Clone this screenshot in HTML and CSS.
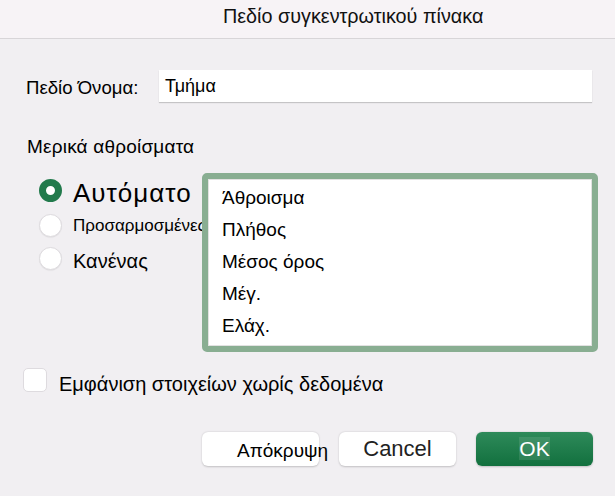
FILE: index.html
```html
<!DOCTYPE html>
<html lang="el">
<head>
<meta charset="utf-8">
<title>Πεδίο συγκεντρωτικού πίνακα</title>
<link rel="stylesheet" href="styles.css">
</head>
<body>
<div class="dialog">
  <header class="titlebar">Πεδίο συγκεντρωτικού πίνακα</header>

  <div class="name-row">
    <label class="name-label" for="field-name">Πεδίο Όνομα:</label>
    <div class="name-input" id="field-name">Τμήμα</div>
  </div>

  <div class="section-label">Μερικά αθροίσματα</div>

  <div class="subtotals">
    <div class="radios">
      <div class="radio-row row-auto">
        <span class="radio checked"></span>
        <span class="radio-label label-auto">Αυτόματο</span>
      </div>
      <div class="radio-row row-custom">
        <span class="radio"></span>
        <span class="radio-label label-custom">Προσαρμοσμένες</span>
      </div>
      <div class="radio-row row-none">
        <span class="radio"></span>
        <span class="radio-label label-none">Κανένας</span>
      </div>
    </div>

    <ul class="listbox">
      <li>Άθροισμα</li>
      <li>Πλήθος</li>
      <li>Μέσος όρος</li>
      <li>Μέγ.</li>
      <li>Ελάχ.</li>
    </ul>
  </div>

  <div class="check-row">
    <span class="checkbox"></span>
    <span class="check-label">Εμφάνιση στοιχείων χωρίς δεδομένα</span>
  </div>

  <div class="buttons">
    <button class="btn btn-hide">Απόκρυψη</button>
    <button class="btn btn-cancel">Cancel</button>
    <button class="btn btn-ok"><span class="ok-text">OK</span></button>
  </div>
</div>
</body>
</html>
```

FILE: styles.css
```css
* {
  box-sizing: border-box;
}

html, body {
  margin: 0;
  padding: 0;
}

body {
  width: 615px;
  height: 496px;
  overflow: hidden;
  background: #f1eff2;
  font-family: "Liberation Sans", Arial, sans-serif;
  color: #000;
}

.dialog {
  width: 615px;
  height: 496px;
}

/* window title */
.titlebar {
  height: 39px;
  background: #f7f3f6;
  border-bottom: 1px solid #d8d5d8;
  padding-left: 223px;
  font-size: 19.8px;
  line-height: 32px;
  color: #111;
}

/* field name */
.name-row {
  display: flex;
  align-items: center;
  margin-top: 31px;
  height: 32px;
}

.name-label {
  width: 159px;
  padding-left: 26px;
  padding-top: 3px;
  font-size: 18.6px;
}

.name-input {
  width: 433px;
  height: 32px;
  background: #fff;
  box-shadow: 0 1px 1px rgba(0, 0, 0, 0.18);
  padding-left: 6px;
  padding-top: 6px;
  font-size: 18px;
  line-height: 20px;
}

.section-label {
  margin-top: 35px;
  padding-left: 27px;
  font-size: 19px;
  letter-spacing: 0.2px;
  line-height: 20px;
}

/* subtotal options and function list */
.subtotals {
  display: flex;
  margin-top: 16px;
  height: 179px;
}

.radios {
  width: 202px;
  padding-left: 39px;
}

.radio-row {
  display: flex;
  align-items: flex-start;
  white-space: nowrap;
}

.row-auto { height: 34px; }
.row-custom { height: 35px; }
.row-none { height: 33px; }

.radio {
  flex: none;
  width: 23px;
  height: 23px;
  border-radius: 50%;
  background: #fff;
  border: 1px solid #dedbdf;
  box-shadow: 0 0.5px 1px rgba(0, 0, 0, 0.08);
  margin-right: 11px;
}

.radio.checked {
  border: 7px solid #227a4c;
  box-shadow: none;
}

.row-auto .radio { margin-top: 6px; }
.row-custom .radio { margin-top: 7px; }
.row-none .radio { margin-top: 5px; }

.radio-label {
  line-height: 1;
}

.label-auto {
  font-size: 26px;
  letter-spacing: 1px;
  margin-top: 7px;
}

.label-custom {
  font-size: 17px;
  margin-top: 10px;
}

.label-none {
  font-size: 20px;
  margin-top: 9px;
}

.listbox {
  position: relative;
  list-style: none;
  margin: 0;
  width: 396px;
  height: 179px;
  background: #fff;
  border: 6px solid #89ae92;
  border-radius: 5px;
  box-shadow: inset 0 0 0 1px #e2e2e2;
  padding: 3px 0 0 14px;
  font-size: 19px;
  line-height: 32px;
}

/* show items without data */
.check-row {
  display: flex;
  align-items: flex-start;
  margin-top: 16px;
  padding-left: 23px;
  height: 24px;
}

.checkbox {
  width: 24px;
  height: 24px;
  border-radius: 5px;
  background: #fff;
  border: 1px solid #dedbdf;
  margin-right: 12px;
}

.check-label {
  font-size: 20px;
  line-height: 1;
  margin-top: 6px;
}

/* dialog buttons */
.buttons {
  display: flex;
  gap: 20px;
  margin-top: 40px;
  padding-left: 202px;
}

.btn {
  width: 117px;
  height: 34px;
  border: none;
  border-radius: 6px;
  background: #fff;
  box-shadow: 0 0.5px 2px rgba(0, 0, 0, 0.2);
  font-family: "Liberation Sans", Arial, sans-serif;
  padding: 0;
  white-space: nowrap;
}

.btn-hide {
  text-align: left;
  padding-left: 35px;
  padding-top: 4px;
  font-size: 19px;
  color: #000;
  overflow: visible;
}

.btn-cancel {
  font-size: 22px;
  color: #222;
}

.btn-ok {
  background: linear-gradient(#2e8a5a, #12703e);
  color: #fff;
  font-size: 21px;
}

.ok-text {
  background: rgba(255, 255, 255, 0.1);
}
```
